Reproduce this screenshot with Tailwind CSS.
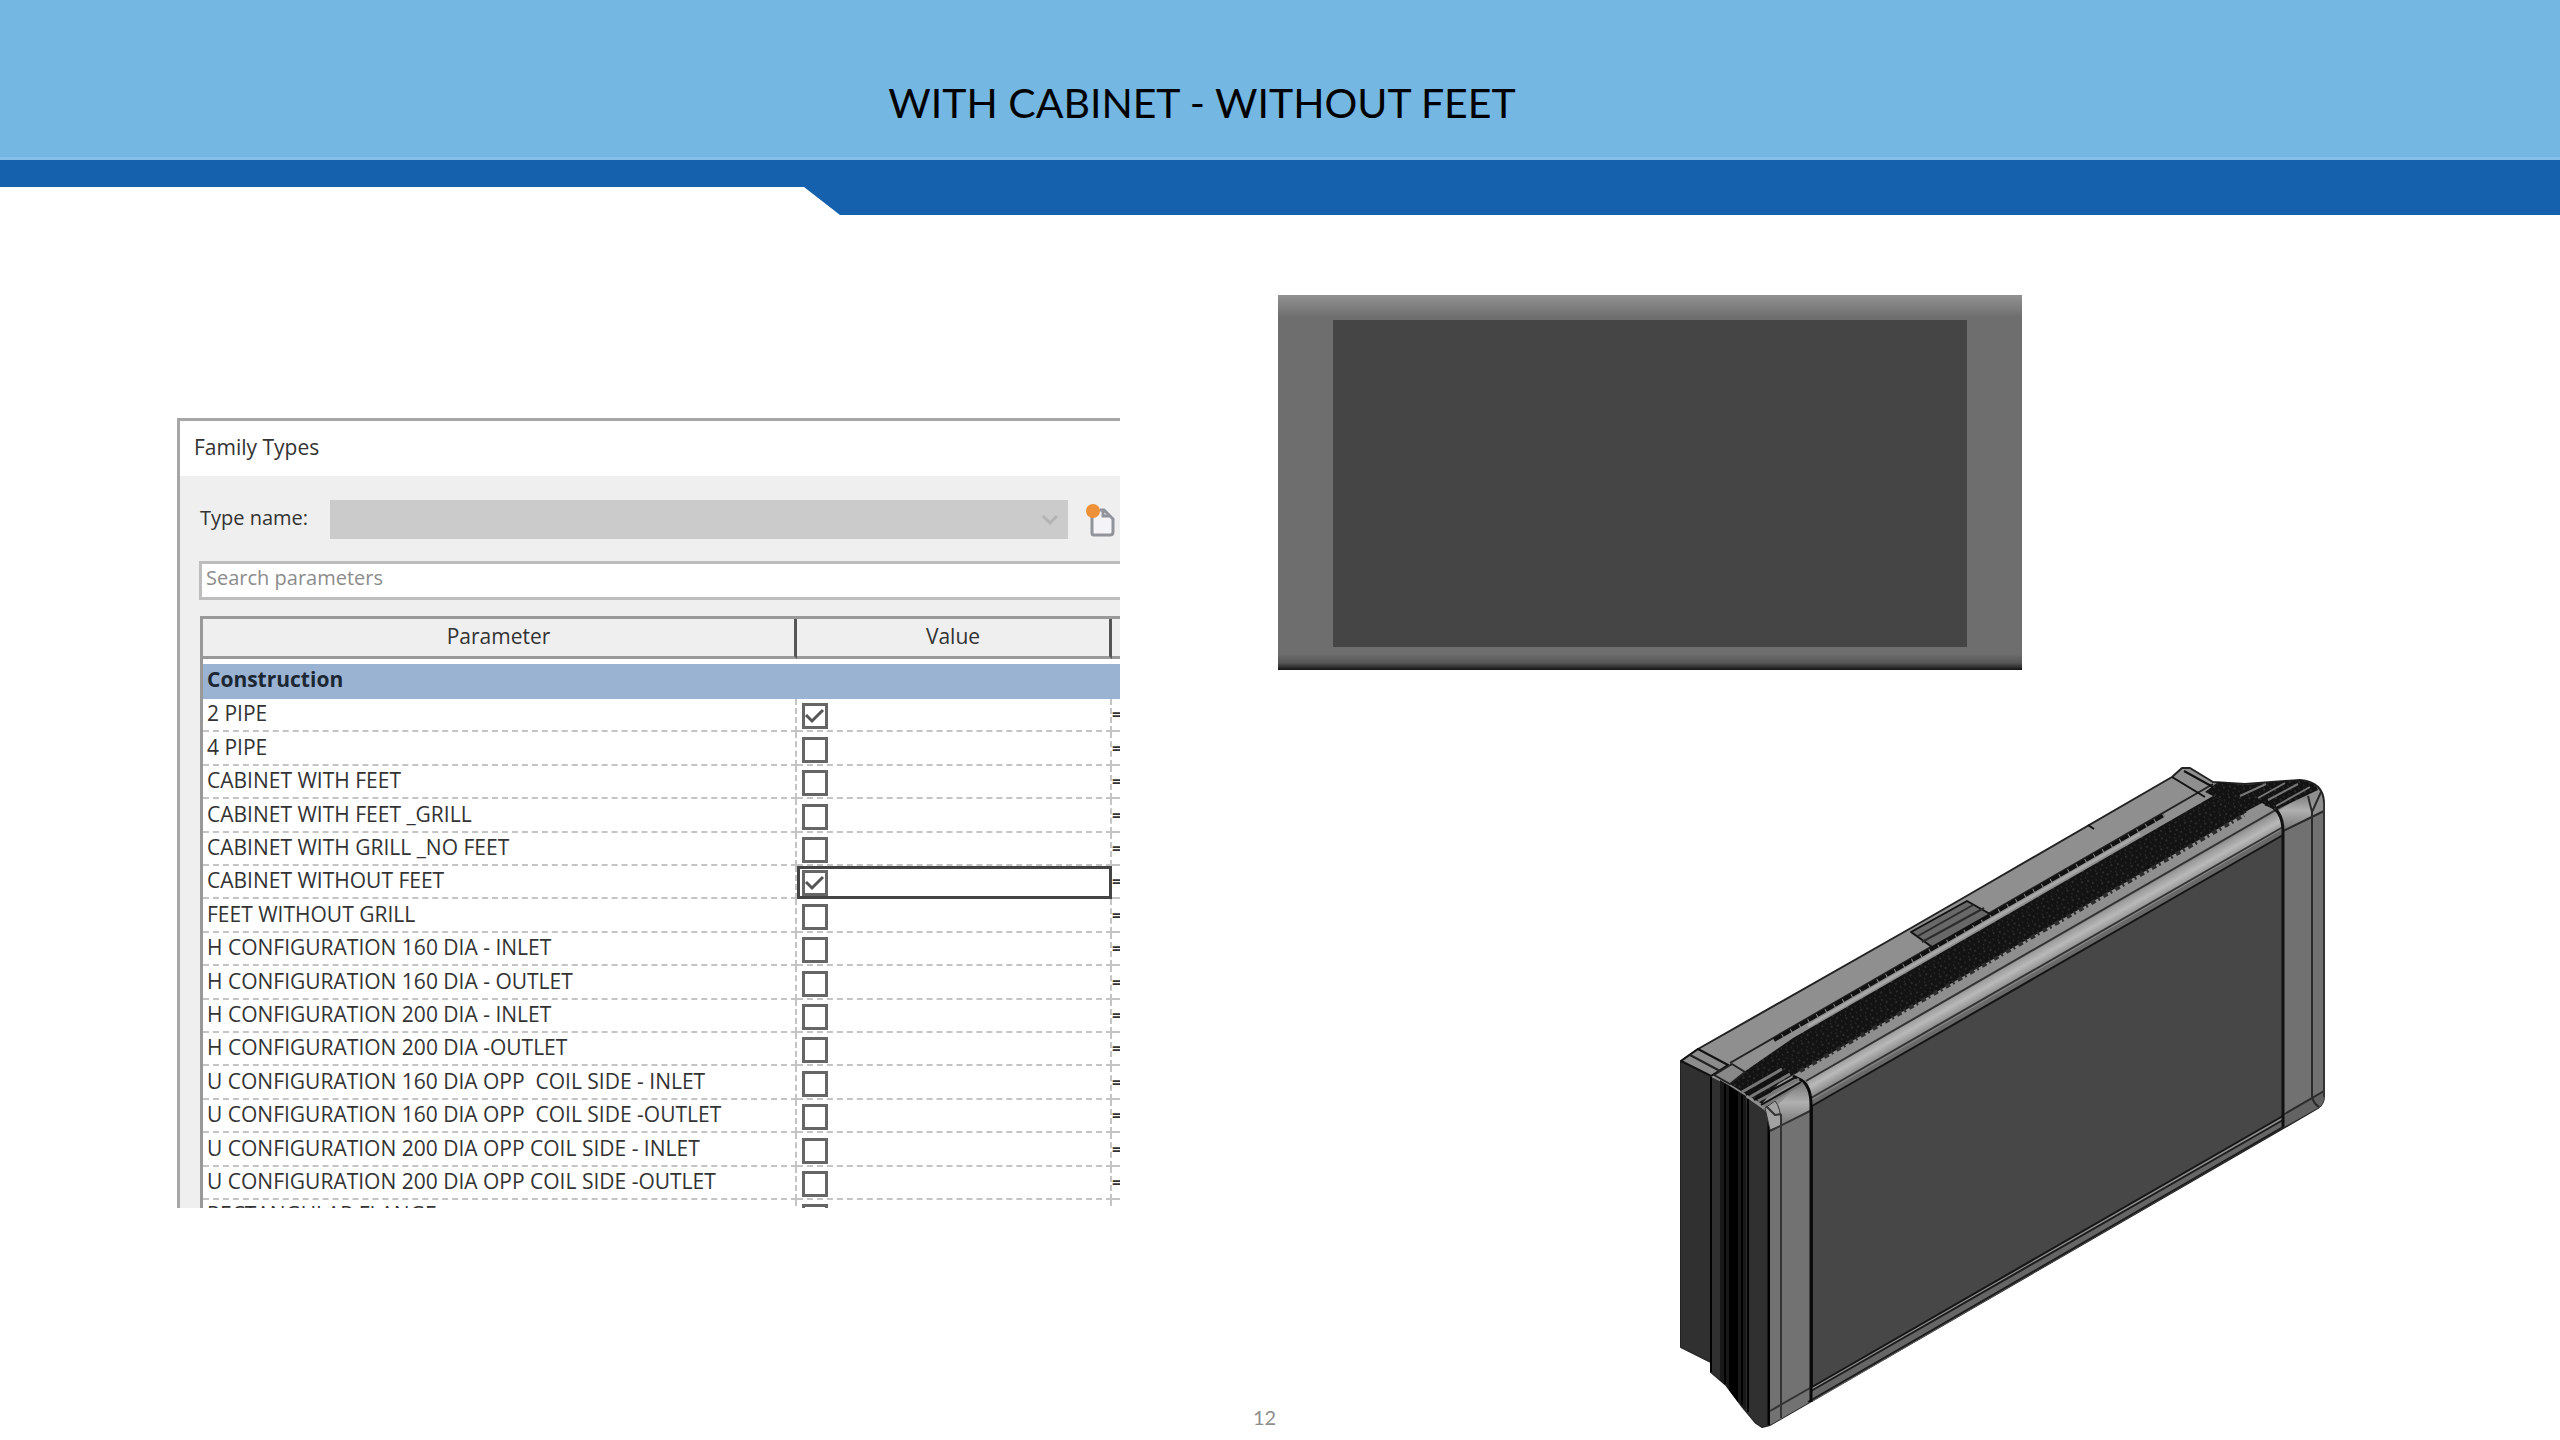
<!DOCTYPE html>
<html lang="en">
<head>
    <meta charset="UTF-8">
    <meta name="viewport" content="width=device-width, initial-scale=1.0">
    <title>With Cabinet - Without Feet</title>
    <script src="https://cdn.jsdelivr.net/npm/@tailwindcss/browser@4"></script>
</head>
<body class="bg-white min-h-screen flex flex-col font-['Open_Sans',sans-serif] text-[#333]">
    <!-- Slide header -->
    <header>
        <div class="h-40 bg-[#74b7e2] border-b-3 border-[#86c0e8] pt-[72px] pr-[156px]">
            <h1 class="text-center font-[Lato,sans-serif] text-[41px] leading-[62px] text-black">WITH CABINET - WITHOUT FEET</h1>
        </div>
        <svg class="block w-full h-[55px]" viewBox="0 0 2560 55" preserveAspectRatio="none">
            <path d="M0 0H2560V55H840L804 27H0Z" fill="#1661ad"/>
        </svg>
    </header>

    <main class="grow grid grid-cols-[943fr_1050fr] gap-x-[158px] pl-[177px] pr-[232px] items-start">
        <!-- Family Types dialog -->
        <section class="mt-[203px] h-[790px] overflow-hidden border-t-3 border-l-3 border-[#a6a6a6] bg-[#efefef]">
            <h2 class="h-[55px] bg-white pl-[14px] text-[21px] leading-[53px]">Family Types</h2>
            <div class="flex items-center pl-5 pt-6">
                <label for="type-name" class="w-[130px] pb-1 text-[20px] leading-7">Type name:</label>
                <div class="relative grow">
                    <select id="type-name" disabled class="block w-full h-[39px] appearance-none bg-[#cbcbcb]">
                        <option></option>
                    </select>
                    <svg class="absolute right-2 top-3 w-5 h-4" viewBox="0 0 20 16" fill="none" stroke="#b3b3b3" stroke-width="3"><path d="M3 4L10 11L17 4"/></svg>
                </div>
                <button type="button" aria-label="New type" class="w-[52px] pl-4">
                    <svg class="w-8 h-9" viewBox="0 0 32 36">
                        <path d="M8 15V31Q8 33 10 33H26Q29 33 29 30V17L20 8H16" fill="#f4f4f8" stroke="#92949c" stroke-width="3"/>
                        <path d="M19 8V14H25" fill="none" stroke="#92949c" stroke-width="3"/>
                        <circle cx="9" cy="9" r="7" fill="#ee9138"/>
                    </svg>
                </button>
            </div>
            <div class="pl-[19px] pt-[22px]">
                <input type="text" aria-label="Search parameters" placeholder="Search parameters" class="block w-full h-[39px] border-3 border-r-0 border-[#bdbdbd] bg-white pl-1 pb-1.5 text-[20px] placeholder:text-[#8c8c8c]">
            </div>
            <div class="pl-5 pt-4">
                <table class="w-full table-fixed border-separate border-spacing-0 border-l-3 border-t-3 border-[#999] bg-white text-[21px] leading-7">
                    <colgroup>
                        <col>
                        <col class="w-[315px]">
                        <col class="w-2">
                    </colgroup>
                    <thead>
                        <tr class="h-10 bg-[#efefef]">
                            <th class="p-0 pb-1 font-normal border-b-3 border-b-[#999] border-r-3 border-r-[#555]">Parameter</th>
                            <th class="p-0 pb-1 font-normal border-b-3 border-b-[#999] border-r-3 border-r-[#555]">Value</th>
                            <th class="border-b-3 border-[#999]"></th>
                        </tr>
                    </thead>
                    <tbody>
                        <tr class="h-10">
                            <th colspan="3" class="border-t-5 border-white bg-[#9ab3d2] bg-clip-padding p-0 pl-1 pb-1.5 text-left font-bold text-[#1c2733]">Construction</th>
                        </tr>
                    </tbody>
                    <tbody id="parameters"></tbody>
                </table>
            </div>
        </section>

        <!-- Cabinet views -->
        <div class="pt-20 flex flex-col">
            <div class="w-17/24 h-[375px] bg-linear-to-b from-[#929292] via-[#6e6e6e] via-6% to-[#6e6e6e] flex flex-col">
                <div class="grow mt-[25px] mx-[55px] bg-[#454545]"></div>
                <div class="h-[23px] bg-linear-to-b from-[#6e6e6e] from-30% via-[#555] via-70% to-[#151515]"></div>
            </div>
            <svg class="mt-[95px] self-end w-[62%]" viewBox="1677 765 651 665" stroke-linejoin="round">
                <defs>
                    <linearGradient id="bar" gradientUnits="userSpaceOnUse" x1="2040" y1="943" x2="2053" y2="966">
                        <stop offset="0" stop-color="#8a8a8a"/>
                        <stop offset=".45" stop-color="#b9b9b9"/>
                        <stop offset="1" stop-color="#747474"/>
                    </linearGradient>
                    <linearGradient id="cap" x1="0" y1="0" x2="0" y2="1">
                        <stop offset="0" stop-color="#777"/>
                        <stop offset=".45" stop-color="#b0b0b0"/>
                        <stop offset="1" stop-color="#747474"/>
                    </linearGradient>
                    <pattern id="mesh" width="17" height="11" patternUnits="userSpaceOnUse" patternTransform="rotate(-30)">
                        <rect width="17" height="11" fill="#131313"/>
                        <path d="M1 1H3M7 3H9M13 1H14M4 6H5M10 7H12M15 6H16M2 9H3M7 10H8" stroke="#454545" stroke-width="1"/>
                    </pattern>
                </defs>
                <!-- silhouette -->
                <path d="M1681 1061L1698 1049L1911 928L1970 894L2172 777L2182 768H2190L2213 782L2245 784L2300 780Q2323 782 2324 802V1096Q2324 1104 2318 1108L1770 1425L1762 1427L1756 1423L1741 1405L1726 1385L1711 1372V1362L1681 1347Z" fill="#8f8f8f" stroke="#222" stroke-width="2"/>
                <!-- left side -->
                <path d="M1681 1061L1711 1077L1730 1086L1760 1107Q1769 1112 1769 1122V1425L1762 1427L1756 1423L1741 1405L1726 1385L1711 1372V1362L1681 1347Z" fill="#303030"/>
                <path d="M1720 1080L1746 1096V1410L1741 1405L1726 1385L1720 1380Z" fill="#191919"/>
                <path d="M1729 1086L1738 1092V1402L1729 1390Z" fill="#000"/>
                <path d="M1711 1077V1372M1725 1084V1384M1742 1095V1405M1748 1099V1412" fill="none" stroke="#000" stroke-width="2"/>
                <path d="M1769 1118V1425" stroke="#000" stroke-width="3"/>
                <!-- front corner column -->
                <path d="M1770 1126L1810 1108V1402L1770 1425Z" fill="#727272"/>
                <path d="M1776 1106L1802 1083Q1810 1088 1810 1110L1781 1126Z" fill="url(#cap)"/>
                <path d="M1765 1108L1775 1101Q1781 1107 1781 1126L1770 1130Z" fill="#a2a2a2" stroke="#333"/>
                <path d="M1770 1131L1810 1111M1781 1114V1418M1770 1411L1810 1388M1766 1106L1775 1115L1781 1114" fill="none" stroke="#333" stroke-width="2"/>
                <!-- rounded top bar -->
                <path d="M1807 1081L2277 812Q2283 818 2283 830L1811 1101Q1811 1090 1807 1081Z" fill="url(#bar)"/>
                <path d="M1806 1081L2312 789M1811 1098L2283 827" fill="none" stroke="#333" stroke-width="2"/>
                <!-- front panel -->
                <path d="M1811 1101L2283 829V836L1812 1107Z" fill="#696969"/>
                <path d="M1812 1106L2283 835V1116L1812 1387Z" fill="#474747" stroke="#151515" stroke-width="2"/>
                <path d="M1812 1391L2283 1120V1128L1812 1402Z" fill="#666"/>
                <path d="M1811 1391L2283 1120M1808 1402L2283 1127" stroke="#1c1c1c" stroke-width="2"/>
                <path d="M1793 1076L1801 1080Q1811 1086 1811 1105V1402" fill="none" stroke="#0a0a0a" stroke-width="3"/>
                <!-- right end -->
                <path d="M2277 812L2306 793Q2313 796 2313 814L2284 831Z" fill="url(#cap)"/>
                <path d="M2284 831L2324 811V1090L2284 1115Z" fill="#717171"/>
                <path d="M2284 1116L2324 1091V1098Q2324 1104 2318 1108L2284 1127Z" fill="#636363"/>
                <path d="M2283 831L2324 811M2283 1115L2324 1091M2312 812V1096Q2313 1103 2319 1107M2312 812L2308 796M2312 812L2321 792" fill="none" stroke="#2a2a2a" stroke-width="2"/>
                <path d="M2265 804Q2283 808 2283 832V1127" fill="none" stroke="#111" stroke-width="3"/>
                <path d="M2324 802V1097" stroke="#333" stroke-width="2"/>
                <!-- air grill -->
                <path d="M1728 1083L1793 1038L2213 796L2247 812L1802 1070L1778 1084L1762 1104Z" fill="url(#mesh)"/>
                <path d="M1800 1071L2244 815" stroke="#2c2c2c" stroke-width="4" stroke-dasharray="5 3 2 4"/>
                <path d="M2205 792L2218 782L2245 785L2300 780Q2315 781 2318 790L2275 810L2262 803L2245 812Z" fill="url(#mesh)"/>
                <path d="M2258 798L2285 783M2268 800L2298 784M2276 806L2310 787M2240 796L2266 784" stroke="#777" stroke-width="2"/>
                <path d="M1742 1092L1782 1069M1750 1097L1790 1074M1758 1101L1799 1079M1763 1106L1803 1083" stroke="#777" stroke-width="3"/>
                <path d="M1746 1095L1788 1071M1754 1100L1796 1077M1761 1105L1801 1082" stroke="#111" stroke-width="2"/>
                <!-- top rail -->
                <path d="M1730 1063L2213 784" stroke="#222" stroke-width="2"/>
                <path d="M1774 1040L2164 815" stroke="#111" stroke-width="4" stroke-dasharray="9 1"/>
                <path d="M1808 1026L2140 834" stroke="#a8a8a8" stroke-width="3"/>
                <path d="M1681 1061L1698 1049L1728 1065L1711 1076Z" fill="#8b8b8b" stroke="#111" stroke-width="2"/>
                <path d="M1690 1055L1720 1071M1714 1075L1732 1064L1745 1072L1730 1084Z" fill="#888" stroke="#222" stroke-width="2"/>
                <path d="M2172 777L2205 797M2184 771L2213 787M2088 825L2094 829" fill="none" stroke="#111" stroke-width="2"/>
                <!-- recess -->
                <path d="M1911 932L1967 901L1990 914L1932 947Z" fill="#686868" stroke="#111" stroke-width="2"/>
                <path d="M1918 936L1973 905M1922 942L1984 908" stroke="#2b2b2b" stroke-width="2"/>
            </svg>
        </div>
    </main>

    <!-- the page number shares its line with the foot of the cabinet view -->
    <footer class="h-[38px] -mt-[38px] pr-[31px] text-center font-[Lato,sans-serif] text-[20px] leading-[30px] text-[#8e8e8e]">12</footer>

    <script>
        const parameters = [
            ['2 PIPE', true],
            ['4 PIPE', false],
            ['CABINET WITH FEET', false],
            ['CABINET WITH FEET _GRILL', false],
            ['CABINET WITH GRILL _NO FEET', false],
            ['CABINET WITHOUT FEET', true],
            ['FEET WITHOUT GRILL', false],
            ['H CONFIGURATION 160 DIA - INLET', false],
            ['H CONFIGURATION 160 DIA - OUTLET', false],
            ['H CONFIGURATION 200 DIA - INLET', false],
            ['H CONFIGURATION 200 DIA -OUTLET', false],
            ['U CONFIGURATION 160 DIA OPP  COIL SIDE - INLET', false],
            ['U CONFIGURATION 160 DIA OPP  COIL SIDE -OUTLET', false],
            ['U CONFIGURATION 200 DIA OPP COIL SIDE - INLET', false],
            ['U CONFIGURATION 200 DIA OPP COIL SIDE -OUTLET', false],
            ['RECTANGULAR FLANGE', false]
        ];
        const selected = 'CABINET WITHOUT FEET';

        const tbody = document.getElementById('parameters');
        parameters.forEach(([name, checked], i) => {
            const row = document.createElement('tr');
            row.className = 'h-[33px] nth-[5n+2]:h-[34px] nth-[5n+4]:h-[34px]';
            const valueBorder = name === selected
                ? 'border-3 border-[#444] pl-[2px]'
                : 'border-b-2 border-r-2 border-dashed border-[#c4c4c4] pl-[5px] pt-[3px]';
            row.innerHTML = `
                <td class="border-b-2 border-r-2 border-dashed border-[#c4c4c4] p-0 pl-1 whitespace-pre"><label for="param-${i}" class="block h-[31px] leading-[28px]">${name}</label></td>
                <td class="p-0 ${valueBorder}">
                    <span class="relative block size-[26px]">
                        <input type="checkbox" id="param-${i}" ${checked ? 'checked' : ''} class="peer block size-[26px] appearance-none border-3 border-[#666] bg-white">
                        <svg class="absolute inset-0 hidden peer-checked:block pointer-events-none" viewBox="0 0 26 26" fill="none" stroke="#555" stroke-width="3"><path d="M4 12L10 18L21 7"/></svg>
                    </span>
                </td>
                <td class="border-b-2 border-dashed border-[#c4c4c4] p-0 overflow-hidden text-[16px] leading-[29px] font-bold">=</td>`;
            tbody.appendChild(row);
        });
    </script>
</body>
</html>
